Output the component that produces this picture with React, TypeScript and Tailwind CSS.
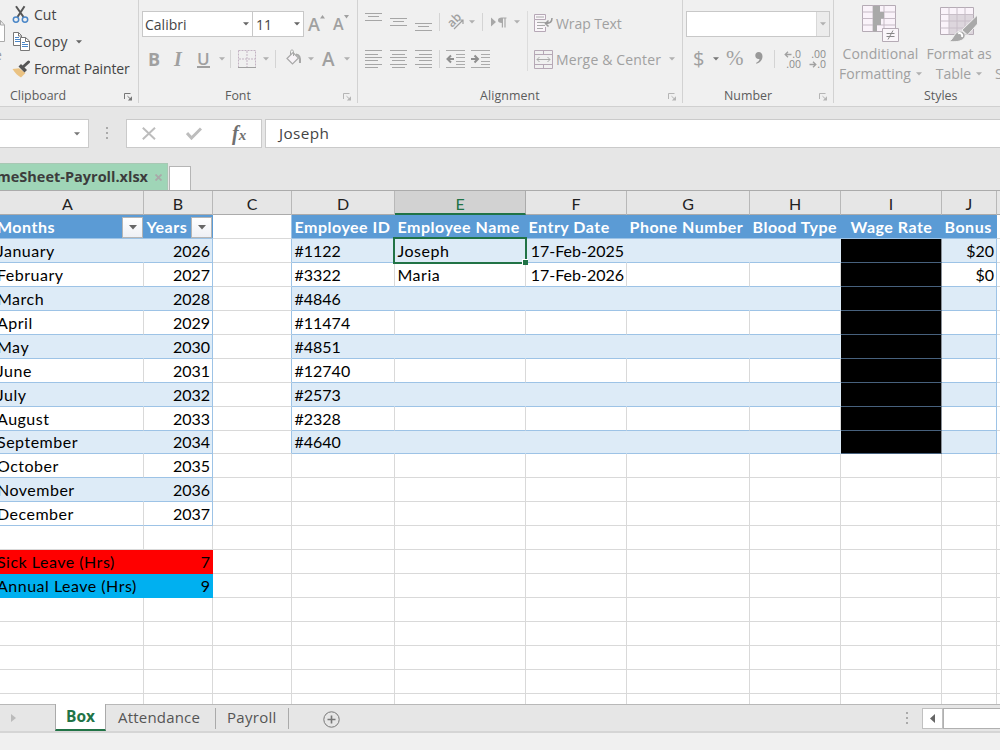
import type { ReactNode } from "react"
import clsx from "clsx"

type Cell = string | undefined

const columns = ["A", "B", "C", "D", "E", "F", "G", "H", "I", "J", "K"]

const months = [
  "January",
  "February",
  "March",
  "April",
  "May",
  "June",
  "July",
  "August",
  "September",
  "October",
  "November",
  "December",
]

const employees = [
  { id: "#1122", name: "Joseph", date: "17-Feb-2025", bonus: "$20" },
  { id: "#3322", name: "Maria", date: "17-Feb-2026", bonus: "$0" },
  { id: "#4846" },
  { id: "#11474" },
  { id: "#4851" },
  { id: "#12740" },
  { id: "#2573" },
  { id: "#2328" },
  { id: "#4640" },
] as { id: string; name?: string; date?: string; bonus?: string }[]

const headers: Cell[] = [
  "Months",
  "Years",
  undefined,
  "Employee ID",
  "Employee Name",
  "Entry Date",
  "Phone Number",
  "Blood Type",
  "Wage Rate",
  "Bonus",
  undefined,
]

const gridCols =
  "grid grid-cols-[152px_69px_79px_103px_131px_101px_123px_91px_101px_55px_20px] -ml-2 w-[1025px]"

function Caret({ className = "text-[#b0b0b0]" }: { className?: string }) {
  return (
    <svg width="6" height="4" viewBox="0 0 6 4" className={clsx("shrink-0", className)}>
      <path d="M0 0.3h6L3 3.6z" fill="currentColor" />
    </svg>
  )
}

function Sep({ className }: { className: string }) {
  return <div className={clsx("w-px shrink-0", className)} />
}

function Launcher({ dark }: { dark?: boolean }) {
  return (
    <svg width="9" height="8" viewBox="0 0 9 8" fill="none" className={dark ? "text-[#777]" : "text-[#b5b5b5]"}>
      <path d="M0.5 6V0.5H6.5M3.5 3.2L7 6.4" stroke="currentColor" />
      <path d="M8 3.2v4.3H3.8z" fill="currentColor" />
    </svg>
  )
}

function Group({
  label,
  className,
  labelClass,
  launcher,
  dark,
  children,
}: {
  label: string
  className: string
  labelClass: string
  launcher?: boolean
  dark?: boolean
  children: ReactNode
}) {
  return (
    <section className={clsx("flex h-[103px] shrink-0 flex-col border-[#d2d2d2]", className)}>
      <div className="h-[87px]">{children}</div>
      <div className="flex h-[18px] shrink-0 translate-y-[2px] items-center">
        <span className={clsx("text-[12.4px] text-[#5c5c5c]", labelClass)}>{label}</span>
        {launcher && (
          <span className="mr-[5px] ml-auto pt-px">
            <Launcher dark={dark} />
          </span>
        )}
      </div>
    </section>
  )
}

function Lines({ rows, className }: { rows: [number, number, number][]; className?: string }) {
  return (
    <svg width="18" height="20" viewBox="0 0 18 20" className={clsx("shrink-0", className)}>
      {rows.map(([x, y, w]) => (
        <rect key={y} x={x} y={y} width={w} height="1" fill="#a6a6a6" />
      ))}
    </svg>
  )
}

function Clipboard() {
  return (
    <Group label="Clipboard" className="w-[139px] border-r" labelClass="ml-[10px]" launcher dark>
      <div className="flex h-full">
        <div className="w-[12px] overflow-hidden pt-[20px]">
          <svg width="6" height="22" viewBox="0 0 6 22" fill="#fff" stroke="#aaa">
            <path d="M-3 0.5H0.5L4.5 5V21.5H-3zM0.5 0.5V5H4.5" />
          </svg>
          <div className="-ml-[6px] pt-[3px] text-[14px] leading-[20px] text-[#999]">e</div>
        </div>
        <div className="text-[14px] text-[#444]">
          <div className="flex h-[28px] items-center">
            <svg width="18" height="19" viewBox="0 0 18 19" fill="none" className="mr-[4px]">
              <path d="M4 1.2L11.5 12M12.5 1.2L5.5 12" stroke="#555" strokeWidth="2" />
              <circle cx="4" cy="14.6" r="2.7" stroke="#4a86c7" strokeWidth="1.5" />
              <circle cx="13" cy="14.6" r="2.7" stroke="#4a86c7" strokeWidth="1.5" />
            </svg>
            <span>Cut</span>
          </div>
          <div className="flex h-[27px] items-center">
            <svg width="18" height="19" viewBox="0 0 18 19" className="mr-[4px]">
              <path d="M1.5 0.5H6.5L9.5 3.5V13.5H1.5z" fill="#fff" stroke="#777" />
              <path d="M6.5 0.5V4H9.5" fill="none" stroke="#777" />
              <path d="M3 5.5H7M3 7.5H8M3 9.5H8" stroke="#4a86c7" />
              <path d="M8.5 5.5H13.5L17.5 9V18.5H8.5z" fill="#fff" stroke="#777" />
              <path d="M13.5 5.5V9.5H17" fill="none" stroke="#777" />
              <path d="M10 10.5H13M10 12.5H16M10 14.5H16" stroke="#4a86c7" />
            </svg>
            <span className="tracking-[0.25px]">Copy</span>
            <Caret className="ml-[8px] text-[#666]" />
          </div>
          <div className="flex h-[27px] items-center">
            <svg width="19" height="18" viewBox="0 0 19 18" className="mr-[3px]">
              <path d="M0.5 9L7 8.2L13.5 13L9 17.5C6 16 3 13 0.5 9z" fill="#eac282" />
              <path d="M6.5 6.5L9 4L15 10L12.5 12.5z" fill="#555" />
              <path d="M11.5 6.5L16.5 2" stroke="#555" strokeWidth="3" strokeLinecap="round" />
            </svg>
            <span className="tracking-[-0.15px] whitespace-nowrap">Format Painter</span>
          </div>
        </div>
      </div>
    </Group>
  )
}

function FontGroup() {
  return (
    <Group label="Font" className="w-[219px] border-r" labelClass="ml-[86px]" launcher>
      <div className="flex h-[37px] items-end pl-[3px]">
        <div className="flex h-[26px] w-[111px] items-center border border-[#c8c8c8] bg-white pl-[2px] text-[14px] text-[#444]">
          Calibri
          <Caret className="mr-[3px] ml-auto text-[#666]" />
        </div>
        <div className="flex h-[26px] w-[51px] items-center border border-l-0 border-[#c8c8c8] bg-white pl-[3px] text-[14px] text-[#444]">
          11
          <Caret className="mr-[3px] ml-auto text-[#666]" />
        </div>
        <div className="flex h-[26px] items-center font-semibold text-[#a0a0a0]">
          <span className="ml-[4px] w-[12px] text-[18px]">A</span>
          <svg width="5" height="4" viewBox="0 0 5 4" className="mb-[14px]">
            <path d="M0 3.5h5L2.5 0z" fill="#a0a0a0" />
          </svg>
          <span className="ml-[8px] w-[11px] text-[16px]">A</span>
          <svg width="5" height="4" viewBox="0 0 5 4" className="mb-[14px]">
            <path d="M0 0h5L2.5 3.5z" fill="#a0a0a0" />
          </svg>
        </div>
      </div>
      <div className="flex h-[44px] items-center text-[#a0a0a0]">
        <span className="ml-[9px] w-[25px] text-[18px] font-bold">B</span>
        <span className="w-[23px] pl-px font-['Liberation_Serif'] text-[20px] font-bold italic">I</span>
        <span className="flex w-[23px] flex-col pl-px text-[17px] leading-[17px] font-semibold">
          U
          <i className="-mt-px h-[2px] w-[13px] bg-[#a0a0a0]" />
        </span>
        <Caret />
        <Sep className="ml-[5px] h-[18px] bg-[#d4d4d4]" />
        <svg width="18" height="18" viewBox="0 0 18 18" fill="none" className="ml-[7px]">
          <path d="M0.5 0.5H17.5V17M0.5 0.5V17M9 1V17M1 9H17" stroke="#c3b3c3" strokeDasharray="2 1" />
          <path d="M0 17.5H18" stroke="#a0a0a0" />
        </svg>
        <Caret className="ml-[7px] text-[#b0b0b0]" />
        <Sep className="ml-[6px] h-[18px] bg-[#d4d4d4]" />
        <svg width="16" height="17" viewBox="0 0 16 17" fill="none" stroke="#a8a8a8" className="mb-[4px] ml-[10px]">
          <path d="M1 9.5L7 3.5L12.5 9L6.5 15z" fill="#f7f3f7" strokeWidth="1.2" />
          <path d="M4.5 6V2.5C4.5 0.5 7.5 0.5 7.5 2.5V7" />
          <path d="M10 5.5C13 5.5 14.5 8 14 14" strokeWidth="2" />
        </svg>
        <Caret className="ml-[6px] text-[#b0b0b0]" />
        <span className="ml-[8px] w-[22px] text-[19px] font-semibold">A</span>
        <Caret />
      </div>
    </Group>
  )
}

function Alignment() {
  return (
    <Group label="Alignment" className="w-[325px] border-r" labelClass="ml-[122px] tracking-[0.1px]" launcher>
      <div className="flex h-full">
        <div className="w-[169px]">
          <div className="flex h-[44px] items-center pl-[7px]">
            <Lines rows={[[0, 1, 17], [3, 4, 11], [0, 8, 17]]} className="mr-[7px]" />
            <Lines rows={[[0, 6, 17], [3, 9, 11], [0, 13, 17]]} className="mr-[7px]" />
            <Lines rows={[[0, 11, 17], [3, 14, 11], [0, 18, 17]]} />
            <Sep className="ml-[6px] h-[18px] bg-[#d4d4d4]" />
            <span className="relative ml-[7px] h-[18px] w-[17px]">
              <span className="absolute -top-[2px] left-0 -rotate-45 text-[12px] leading-[18px] font-semibold text-[#a0a0a0]">
                ab
              </span>
              <svg width="17" height="18" viewBox="0 0 17 18" fill="none" stroke="#a0a0a0" className="absolute">
                <path d="M7 16L15.5 7.5M12 7H16V11" strokeWidth="1.2" />
              </svg>
            </span>
            <Caret className="ml-[5px] text-[#b0b0b0]" />
            <Sep className="ml-[7px] h-[18px] bg-[#d4d4d4]" />
            <svg width="16" height="11" viewBox="0 0 16 11" className="ml-[8px]" fill="#a8a8a8">
              <path d="M0 0.5L5 5L0 9.5z" />
              <path d="M15.5 0.5V1.6H14.6V10.5H13.4V1.6H12V10.5H10.8V6C8.3 6 7 5 7 3.2S8.3 0.5 10.8 0.5z" />
            </svg>
            <Caret className="ml-[7px] text-[#b0b0b0]" />
          </div>
          <div className="flex h-[30px] items-center pl-[7px]">
            <Lines
              rows={[[0, 1, 17], [0, 5, 13], [0, 8, 17], [0, 11, 13], [0, 15, 17], [0, 18, 13]]}
              className="mr-[7px]"
            />
            <Lines
              rows={[[0, 1, 17], [2, 5, 13], [0, 8, 17], [2, 11, 13], [0, 15, 17], [2, 18, 13]]}
              className="mr-[7px]"
            />
            <Lines rows={[[0, 1, 17], [4, 5, 13], [0, 8, 17], [4, 11, 13], [0, 15, 17], [4, 18, 13]]} />
            <Sep className="ml-[6px] h-[18px] bg-[#d4d4d4]" />
            <svg width="19" height="18" viewBox="0 0 19 18" fill="none" className="ml-[6px]">
              <path d="M0 0.5H19M10 4.5H19M10 7.5H19M10 11.5H19M10 14.5H19M0 17.5H19" stroke="#ababab" />
              <path d="M8 9H2M5 5.5L1.5 9L5 12.5" stroke="#8f8f8f" strokeWidth="2" />
            </svg>
            <svg width="19" height="18" viewBox="0 0 19 18" fill="none" className="ml-[6px]">
              <path d="M0 0.5H19M10 4.5H19M10 7.5H19M10 11.5H19M10 14.5H19M0 17.5H19" stroke="#ababab" />
              <path d="M0 9H6.5M3.5 5.5L7 9L3.5 12.5" stroke="#8f8f8f" strokeWidth="2" />
            </svg>
          </div>
        </div>
        <Sep className="mt-[11px] h-[60px] bg-[#dcdcdc]" />
        <div className="pl-[6px] text-[14px] text-[#a0a0a0]">
          <div className="mt-[4px] flex h-[38px] items-center">
            <svg width="19" height="18" viewBox="0 0 19 18" fill="none" className="mr-[4px]">
              <path d="M0.5 0.5H11.5V5.5H0.5zM0.5 5.5V17.5H11.5V13" fill="#faf6fa" stroke="#b6a8b6" />
              <path d="M2 3H10M3 8.5H15M3 11.5H11M3 14.5H9" stroke="#aaa" />
              <path d="M18 4C18 8 16 9.5 12 9.5M14.5 6.5L11.5 9.5L14.5 12.5" stroke="#999" strokeWidth="1.5" />
            </svg>
            <span className="-ml-px tracking-[-0.1px] whitespace-nowrap">Wrap Text</span>
          </div>
          <div className="flex h-[34px] items-center">
            <svg width="19" height="19" viewBox="0 0 19 19" fill="none" className="mr-[4px]">
              <path d="M0.5 0.5H18.5V18.5H0.5zM0.5 4.5H18.5M0.5 14.5H18.5M9.5 0.5V4.5M9.5 14.5V18.5" stroke="#b6a8b6" />
              <path d="M3 9.5H16M5.5 7L3 9.5L5.5 12M13.5 7L16 9.5L13.5 12" stroke="#aaa" />
            </svg>
            <span className="-ml-px tracking-[0.15px] whitespace-nowrap">Merge &amp; Center</span>
            <Caret className="ml-[8px] text-[#b0b0b0]" />
          </div>
        </div>
      </div>
    </Group>
  )
}

function DecimalIcon({ increase }: { increase?: boolean }) {
  const arrow = (
    <svg width="8" height="7" viewBox="0 0 8 7" fill="none" className={increase ? "" : "-scale-x-100"}>
      <path d="M7.5 3.5H1.5M4 0.8L1.2 3.5L4 6.2" stroke="#a0a0a0" strokeWidth="1.3" />
    </svg>
  )
  return (
    <div className="flex w-[19px] flex-col items-end text-[10.5px] leading-[10px] text-[#8c8c8c]">
      <span className="flex items-center">
        {increase && arrow}
        {increase ? ".0" : ".00"}
      </span>
      <span className="flex items-center">
        {!increase && arrow}
        {increase ? ".00" : ".0"}
      </span>
    </div>
  )
}

function NumberGroup() {
  return (
    <Group label="Number" className="w-[151px] border-r" labelClass="ml-[41px]" launcher>
      <div className="flex h-[37px] items-end pl-[3px]">
        <div className="flex h-[26px] w-[144px] border border-[#c8c8c8] bg-white">
          <div className="ml-auto flex w-[13px] items-center justify-center border-l border-[#d8d8d8] bg-[#ececec]">
            <Caret />
          </div>
        </div>
      </div>
      <div className="flex h-[44px] items-center text-[#a0a0a0]">
        <span className="ml-[10px] w-[20px] text-[20px]">$</span>
        <Caret className="text-[#777]" />
        <span className="ml-[7px] w-[28px] font-['Liberation_Serif'] text-[21px]">%</span>
        <svg width="8" height="12" viewBox="0 0 8 12" className="mb-[3px] ml-[1px]">
          <path
            d="M3.6 0C6 0 7.5 1.7 7.5 4.2C7.5 8 5 10.7 1.5 11.8L1 10.9C3.2 9.8 4.2 8.7 4.5 7C2 7.5 0.3 5.8 0.3 3.5C0.3 1.5 1.7 0 3.6 0z"
            fill="#999"
          />
        </svg>
        <Sep className="ml-[11px] h-[18px] bg-[#d4d4d4]" />
        <div className="ml-[7px]">
          <DecimalIcon increase />
        </div>
        <div className="ml-[6px]">
          <DecimalIcon />
        </div>
      </div>
    </Group>
  )
}

function Styles() {
  return (
    <Group label="Styles" className="w-[200px]" labelClass="ml-[90px]">
      <div className="flex h-full text-[14px] leading-[20px] whitespace-nowrap text-[#a0a0a0]">
        <div className="flex w-[93px] flex-col items-center">
          <svg width="38" height="38" viewBox="0 0 38 38" className="mt-[4px] mb-[2px] shrink-0">
            <path d="M0.5 1.5H33.5V27.5H0.5z" fill="#faf3fa" stroke="#b5abb5" />
            <path d="M0.5 8H33.5M0.5 14.5H33.5M0.5 21H33.5M11 1.5V27.5M22 1.5V27.5" stroke="#c5bac5" fill="none" />
            <path d="M11 2h7v6h4v6.5h-3v6.5h-4v6.5h-4z" fill="#a9a9a9" />
            <path d="M20.5 24.5H36.5V37.5H20.5z" fill="#faf6fa" stroke="#b5abb5" />
            <path d="M24.5 29.5H32.5M24.5 32.5H32.5M31 26.5L26 35.5" stroke="#888" fill="none" />
          </svg>
          <span className="tracking-[0.1px]">Conditional</span>
          <span className="flex items-center gap-[5px]">
            Formatting
            <Caret />
          </span>
        </div>
        <div className="flex w-[64px] flex-col items-center">
          <svg width="38" height="38" viewBox="0 0 38 38" className="mt-[4px] mb-[2px] shrink-0">
            <path d="M0.5 3.5H33.5V30.5H0.5z" fill="#faf3fa" stroke="#b5abb5" />
            <path d="M9 10.5H33V30H9z" fill="#ddd6dd" />
            <path
              d="M0.5 10.5H33.5M0.5 17H33.5M0.5 24H33.5M9 3.5V30.5M17 3.5V30.5M25 3.5V30.5"
              stroke="#c8bec8"
              fill="none"
            />
            <path d="M37.5 11V20L27.5 31L22 26z" fill="#a9a9a9" stroke="#f0f0f0" />
            <path d="M9 37.5C14 35 14 28 20 27C24 27 27 31 24 34.5C21 38 14 38 9 37.5z" fill="#a9a9a9" stroke="#f0f0f0" />
            <path d="M18 29.5C20 28 23 30 22 33" fill="none" stroke="#fff" strokeWidth="2" />
          </svg>
          <span>Format as</span>
          <span className="flex items-center gap-[5px]">
            Table
            <Caret />
          </span>
        </div>
        <span className="pt-[64px] pl-[4px]">Styles</span>
      </div>
    </Group>
  )
}

function FormulaBar() {
  return (
    <div className="flex h-[29px] shrink-0 text-[#444]">
      <div className="flex w-[89px] items-center border border-l-0 border-[#cacaca] bg-white">
        <Caret className="mr-[8px] ml-auto text-[#777]" />
      </div>
      <div className="flex w-[37px] flex-col items-center justify-center gap-[3px] pr-px pb-[2px]">
        <i className="size-[2px] bg-[#aaa]" />
        <i className="size-[2px] bg-[#aaa]" />
        <i className="size-[2px] bg-[#aaa]" />
      </div>
      <div className="flex w-[136px] items-center border border-[#cacaca] bg-white">
        <svg width="14" height="13" viewBox="0 0 14 13" className="ml-[15px]" fill="none" stroke="#bdbdbd" strokeWidth="2">
          <path d="M0.8 0.8L13 12.2M13 0.8L0.8 12.2" />
        </svg>
        <svg width="16" height="13" viewBox="0 0 16 13" className="ml-[30px]" fill="none" stroke="#bdbdbd" strokeWidth="3">
          <path d="M1 6L5.5 11L15 1.5" />
        </svg>
        <span className="ml-[30px] font-['Liberation_Serif'] text-[20px] leading-[20px] font-bold text-[#707070] italic">
          f<span className="text-[15px]">x</span>
        </span>
      </div>
      <div className="ml-[3px] flex flex-1 items-center border border-r-0 border-[#cacaca] bg-white pl-[13px] text-[15.3px] tracking-[0.4px]">
        Joseph
      </div>
    </div>
  )
}

function FilterButton() {
  return (
    <span className="mr-px ml-auto flex h-[21px] w-[21px] shrink-0 items-center justify-center border border-[#b5b5b5] bg-gradient-to-b from-white to-[#eef0f5]">
      <svg width="8" height="5" viewBox="0 0 8 5">
        <path d="M0 0h8L4 4.5z" fill="#666" />
      </svg>
    </span>
  )
}

function cellText(row: number, col: number): Cell {
  if (row < 12 && col === 0) return months[row]
  if (row < 12 && col === 1) return String(2026 + row)
  if (row === 13) return ["Sick Leave (Hrs)", "7"][col]
  if (row === 14) return ["Annual Leave (Hrs)", "9"][col]
  const employee = employees[row]
  if (!employee) return undefined
  return { 3: employee.id, 4: employee.name, 5: employee.date, 9: employee.bonus }[col]
}

function GridCell({ row, col }: { row: number; col: number }) {
  const left = col < 2 && row < 12
  const right = col >= 3 && col <= 9 && row < 9
  const inTable = left || right
  const banded = inTable && row % 2 === 0
  const redacted = col === 8 && row < 9
  const sick = row === 13 && col < 2
  const annual = row === 14 && col < 2
  const edge = (left && col === 1) || (right && col === 9) || (col === 2 && row < 9)
  const alignRight = col === 1 || col === 5 || col === 9
  const selected = row === 0 && col === 4

  return (
    <div
      className={clsx(
        "relative flex items-center border-r border-b",
        row === 8 ? "h-[23px]" : "h-[24px] pt-px",
        alignRight ? "justify-end pr-[2px]" : col === 0 ? "pl-[5px]" : "pl-[2.5px]",
        (col === 0 || col === 4) && "tracking-[0.5px]",
        redacted
          ? "border-r-[#8a9199] border-b-[#47617d] bg-black"
          : sick
            ? "border-[#ff0000] bg-[#ff0000]"
            : annual
              ? "border-[#00b0f0] bg-[#00b0f0]"
              : clsx(
                  banded ? "bg-[#ddebf7]" : "bg-white",
                  inTable ? "border-b-[#9dc3e6]" : "border-b-[#d9d9d9]",
                  edge ? "border-r-[#9dc3e6]" : banded ? "border-r-[#ddebf7]" : "border-r-[#d9d9d9]",
                ),
      )}
    >
      <span className="whitespace-nowrap">{cellText(row, col)}</span>
      {selected && (
        <div className="absolute -top-[2px] -right-[2px] -bottom-[2px] -left-[2px] z-10 border-2 border-[#217346]">
          <i className="absolute -right-[3px] -bottom-[3px] size-[6px] border-t border-l border-white bg-[#217346]" />
        </div>
      )}
    </div>
  )
}

function Sheet() {
  return (
    <div className="h-[514px] shrink-0 overflow-hidden bg-white font-['Lato',sans-serif] text-[16px] leading-[22px] text-black">
      <div className={clsx(gridCols, "h-[25px] border-y border-[#ababab] bg-[#e6e6e6]")}>
        {columns.map((name, i) => (
          <div
            key={name}
            className={clsx(
              "flex h-[24px] items-center justify-center border-r",
              i === 4
                ? "border-r-[#ababab] border-b-2 border-b-[#217346] bg-[#d2d2d2] pt-[4px] text-[#217346]"
                : "border-r-[#b8b8b8] pt-[2px] text-[#222]",
            )}
          >
            {name}
          </div>
        ))}
      </div>
      <div className={gridCols}>
        {headers.map((text, i) => (
          <div
            key={i}
            className={clsx(
              "flex h-[24px] items-center border-b pt-px font-bold tracking-[0.5px] whitespace-nowrap text-white",
              text ? "border-b-[#9dc3e6] bg-[#5b9bd5]" : "border-r border-r-[#9dc3e6] border-b-[#d9d9d9]",
              i === 8 ? "justify-center" : i === 0 ? "pl-[5px]" : "pl-[2.5px]",
            )}
          >
            {text}
            {i < 2 && <FilterButton />}
          </div>
        ))}
      </div>
      <div className={gridCols}>
        {Array.from({ length: 20 }, (_, row) =>
          columns.map((name, col) => <GridCell key={name + row} row={row} col={col} />),
        )}
      </div>
    </div>
  )
}

function SheetTabs() {
  return (
    <div className="flex h-[29px] shrink-0 border-t border-b-2 border-t-[#b8b8b8] border-b-[#d5d5d5] bg-[#e6e6e6] text-[15px] text-[#555]">
      <div className="flex w-[55px] items-center pl-[11px]">
        <svg width="5" height="8" viewBox="0 0 5 8">
          <path d="M0 0L5 4L0 8z" fill="#bbb" />
        </svg>
      </div>
      <div className="-mt-px flex h-[27px] w-[51px] items-center justify-center border-x border-b-2 border-x-[#aaa] border-b-[#217346] bg-white text-[15.5px] font-bold text-[#217346]">
        Box
      </div>
      <div className="flex w-[109px] items-center pb-[2px] pl-[12px] tracking-[0.2px]">Attendance</div>
      <Sep className="mt-[3px] h-[21px] bg-[#aaa]" />
      <div className="flex w-[72px] items-center pb-[2px] pl-[11px] tracking-[0.3px]">Payroll</div>
      <Sep className="mt-[3px] h-[21px] bg-[#aaa]" />
      <svg width="17" height="17" viewBox="0 0 17 17" fill="none" stroke="#777" className="mt-[6px] ml-[34px]">
        <circle cx="8.5" cy="8.5" r="7.7" />
        <path d="M8.5 4.5V12.5M4.5 8.5H12.5" strokeWidth="1.6" />
      </svg>
      <div className="mt-[7px] mr-[14px] ml-auto flex flex-col gap-[3px]">
        <i className="size-[2px] bg-[#aaa]" />
        <i className="size-[2px] bg-[#aaa]" />
        <i className="size-[2px] bg-[#aaa]" />
      </div>
      <div className="mt-[3px] flex h-[21px] w-[78px]">
        <div className="flex w-[21px] items-center justify-center border border-[#c0c0c0] bg-white">
          <svg width="5" height="9" viewBox="0 0 5 9">
            <path d="M5 0L0 4.5L5 9z" fill="#666" />
          </svg>
        </div>
        <div className="flex-1 border-y border-l border-[#b0b0b0] bg-white" />
      </div>
    </div>
  )
}

export default function App() {
  return (
    <div className="flex h-[750px] w-[1000px] flex-col overflow-hidden bg-[#e6e6e6] font-['Open_Sans',sans-serif]">
      <header className="flex h-[107px] shrink-0 border-b border-[#d0d0d0] bg-[#f0f0f0]">
        <Clipboard />
        <FontGroup />
        <Alignment />
        <NumberGroup />
        <Styles />
      </header>
      <div className="h-[12px] shrink-0" />
      <FormulaBar />
      <div className="flex h-[42px] shrink-0 items-end">
        <div className="flex h-[27px] w-[168px] items-center justify-end border-t border-r border-[#a8c8b4] bg-[#9fd5b7] pr-[5px] text-[14.5px] font-bold whitespace-nowrap text-[#3c3c3c]">
          TimeSheet-Payroll.xlsx
          <svg width="7" height="7" viewBox="0 0 7 7" className="ml-[7px] shrink-0" stroke="#a9a9a9" strokeWidth="1.8">
            <path d="M0.5 0.5L6.5 6.5M6.5 0.5L0.5 6.5" />
          </svg>
        </div>
        <div className="ml-px h-[24px] w-[22px] border border-b-0 border-[#b5b5b5] bg-white" />
      </div>
      <Sheet />
      <SheetTabs />
      <footer className="flex-1 bg-[#f0f0f0]" />
    </div>
  )
}
